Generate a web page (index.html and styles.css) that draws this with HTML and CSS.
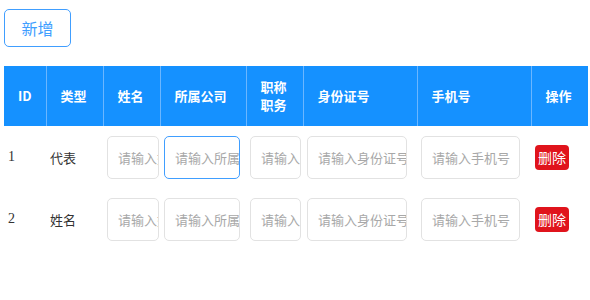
FILE: index.html
```html
<!DOCTYPE html>
<html lang="zh-CN">
<head>
  <meta charset="UTF-8" />
  <meta name="viewport" content="width=device-width, initial-scale=1.0"/>
  <title>人员列表</title>
  <link rel="stylesheet" href="styles.css">
</head>
<body>

  <div class="toolbar">
    <button class="btn-add">新增</button>
  </div>

  <table class="grid">
    <colgroup>
      <col style="width:42px">
      <col style="width:57px">
      <col style="width:57px">
      <col style="width:86px">
      <col style="width:57px">
      <col style="width:114px">
      <col style="width:114px">
      <col style="width:57px">
    </colgroup>
    <thead>
      <tr>
        <th>ID</th>
        <th>类型</th>
        <th>姓名</th>
        <th>所属公司</th>
        <th>职称<br>职务</th>
        <th>身份证号</th>
        <th>手机号</th>
        <th>操作</th>
      </tr>
    </thead>
    <tbody>
      <tr>
        <td class="num">1</td>
        <td>代表</td>
        <td><input class="in-name" placeholder="请输入姓名"></td>
        <td><input class="in-company focus" placeholder="请输入所属公司"></td>
        <td><input class="in-title" placeholder="请输入职称职务"></td>
        <td><input class="in-idcard" placeholder="请输入身份证号"></td>
        <td><input class="in-phone" placeholder="请输入手机号"></td>
        <td><button class="btn-del">删除</button></td>
      </tr>
      <tr>
        <td class="num">2</td>
        <td>姓名</td>
        <td><input class="in-name" placeholder="请输入姓名"></td>
        <td><input class="in-company" placeholder="请输入所属公司"></td>
        <td><input class="in-title" placeholder="请输入职称职务"></td>
        <td><input class="in-idcard" placeholder="请输入身份证号"></td>
        <td><input class="in-phone" placeholder="请输入手机号"></td>
        <td><button class="btn-del">删除</button></td>
      </tr>
    </tbody>
  </table>

</body>
</html>
```

FILE: styles.css
```css
body {
  font-family: "Noto Sans CJK SC", "Noto Sans", sans-serif;
  margin: 0;
  padding: 9px 4px;
  background: #ffffff;
  color: #333;
}

.toolbar {
  margin-bottom: 19px;
}

.btn-add {
  width: 67px;
  height: 38px;
  background: #fff;
  border: 1px solid #409eff;
  border-radius: 5px;
  color: #409eff;
  font-family: inherit;
  font-size: 16px;
  padding: 0;
  cursor: pointer;
}

.grid {
  border-collapse: collapse;
  table-layout: fixed;
  width: 583px;
}

.grid th {
  box-sizing: border-box;
  background: #1591ff;
  color: #fff;
  font-size: 13px;
  font-weight: bold;
  text-align: left;
  height: 60px;
  padding: 0 0 0 14px;
  border-left: 1px solid #6bb6ff;
  line-height: 18px;
}

.grid th:first-child {
  border-left: none;
}

.grid td {
  height: 62px;
  padding: 0 0 0 4px;
  font-size: 13px;
  color: #333;
}

.grid td.num {
  font-family: "Liberation Serif", serif;
  font-size: 14px;
}

.grid input {
  box-sizing: border-box;
  height: 43px;
  border: 1px solid #e2e2e2;
  border-radius: 5px;
  padding: 0 0 0 10px;
  font-family: inherit;
  font-size: 13px;
  color: #333;
  outline: none;
  display: block;
}

.grid input::placeholder {
  color: #a8a8a8;
}

.grid input.focus {
  border-color: #409eff;
}

.in-name { width: 52px; }
.in-company { width: 76px; }
.in-title { width: 51px; }
.in-idcard { width: 100px; }
.in-phone { width: 99px; }

.btn-del {
  background: #e0141c;
  color: #fff;
  border: none;
  border-radius: 4px;
  font-family: "Liberation Serif", "Noto Sans CJK SC", serif;
  font-size: 14px;
  height: 25px;
  padding: 0 3px;
  cursor: pointer;
}
```
